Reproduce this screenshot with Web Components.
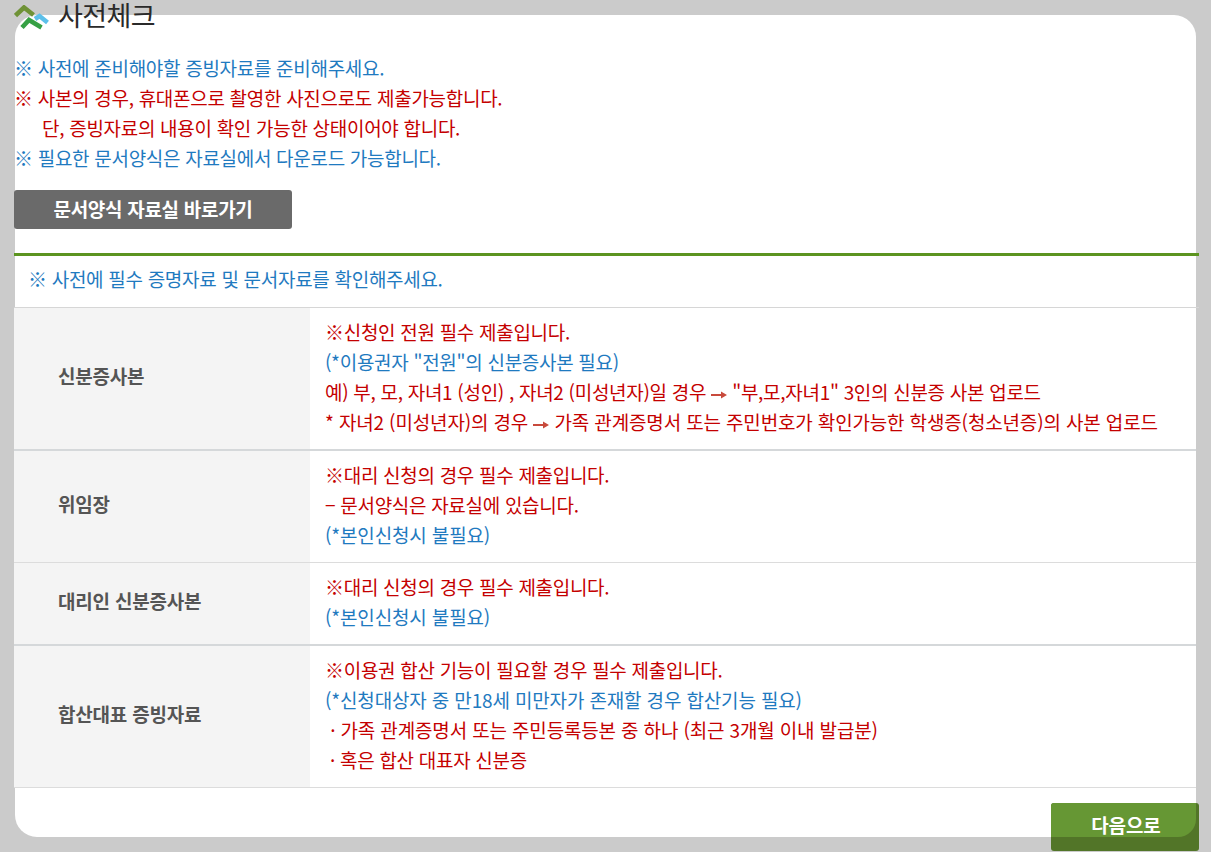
<!DOCTYPE html>
<html lang="ko">
<head>
<meta charset="utf-8">
<title>사전체크</title>
<style>
html, body { margin: 0; height: 100%; overflow: hidden; background: #cbcbcb; }
body { font-family: "Noto Sans CJK KR", "Noto Sans", sans-serif; display: flow-root; }
.wide { letter-spacing: -0.15px; }
</style>
</head>
<body>
<pre-check>
  <check-title>사전체크</check-title>
  <note-lines>
    <div class="blue">※ 사전에 준비해야할 증빙자료를 준비해주세요.</div>
    <div class="red">※ 사본의 경우, 휴대폰으로 촬영한 사진으로도 제출가능합니다.</div>
    <div class="red" style="padding-left:28px">단, 증빙자료의 내용이 확인 가능한 상태이어야 합니다.</div>
    <div class="blue">※ 필요한 문서양식은 자료실에서 다운로드 가능합니다.</div>
  </note-lines>
  <gray-button>문서양식 자료실 바로가기</gray-button>
  <doc-table caption="※ 사전에 필수 증명자료 및 문서자료를 확인해주세요.">
    <doc-row label="신분증사본" heavy>
      <div class="red">※신청인 전원 필수 제출입니다.</div>
      <div class="blue">(*이용권자 "전원"의 신분증사본 필요)</div>
      <div class="red">예) 부, 모, 자녀1 (성인) , 자녀2 (미성년자)일 경우 <arrow-mark></arrow-mark> "부,모,자녀1" 3인의 신분증 사본 업로드</div>
      <div class="red wide">* 자녀2 (미성년자)의 경우 <arrow-mark></arrow-mark> 가족 관계증명서 또는 주민번호가 확인가능한 학생증(청소년증)의 사본 업로드</div>
    </doc-row>
    <doc-row label="위임장">
      <div class="red">※대리 신청의 경우 필수 제출입니다.</div>
      <div class="red">− 문서양식은 자료실에 있습니다.</div>
      <div class="blue wide">(*본인신청시 불필요)</div>
    </doc-row>
    <doc-row label="대리인 신분증사본" heavy>
      <div class="red">※대리 신청의 경우 필수 제출입니다.</div>
      <div class="blue wide">(*본인신청시 불필요)</div>
    </doc-row>
    <doc-row label="합산대표 증빙자료">
      <div class="red">※이용권 합산 기능이 필요할 경우 필수 제출입니다.</div>
      <div class="blue wide">(*신청대상자 중 만18세 미만자가 존재할 경우 합산기능 필요)</div>
      <div class="red wide">&nbsp;· 가족 관계증명서 또는 주민등록등본 중 하나 (최근 3개월 이내 발급분)</div>
      <div class="red">&nbsp;· 혹은 합산 대표자 신분증</div>
    </doc-row>
  </doc-table>
  <next-button>다음으로</next-button>
</pre-check>

<script>
function shadow(el, markup) {
  el.attachShadow({mode: "open"}).innerHTML = markup;
}

// the coloured lines live in light DOM, so they share these colours
const lineColors = `
::slotted(.blue) { color: #1f7ac0; }
::slotted(.red) { color: #c40000; }
`;

customElements.define("pre-check", class extends HTMLElement {
  constructor() {
    super();
    shadow(this, `<style>
:host {
  display: flow-root;
  box-sizing: border-box;
  width: 1181px;
  height: 822px;
  margin: 15px 0 0 15px;
  background: #fff;
  border-radius: 22px;
}
.inner { margin-left: -1px; width: 1185px; }
</style>
<div class="inner"><slot></slot></div>`);
  }
});

customElements.define("check-title", class extends HTMLElement {
  constructor() {
    super();
    shadow(this, `<style>
:host {
  display: flex;
  align-items: flex-start;
  gap: 8px;
  height: 53px;
  margin-top: -15px;
  font-size: 27px;
  line-height: 29px;
  letter-spacing: -0.6px;
  color: #2a2a2a;
}
svg { display: block; margin-top: 5px; flex: none; }
</style>
<svg width="36" height="26" viewBox="0 0 36 26" fill="none" stroke-width="4.6">
  <path d="M1.5 10.5 L10 2.5 L19.5 10" stroke="#6f9236"/>
  <path d="M21 14 L25.5 11 L33.5 17.5" stroke="#5cc0ea"/>
  <path d="M8 22.5 L15 15 L27.5 22.5" stroke="#36a044"/>
</svg>
<span><slot></slot></span>`);
  }
});

customElements.define("note-lines", class extends HTMLElement {
  constructor() {
    super();
    shadow(this, `<style>
:host {
  display: block;
  font-size: 19px;
  line-height: 30px;
  letter-spacing: -0.3px;
}
${lineColors}
</style>
<slot></slot>`);
  }
});

customElements.define("gray-button", class extends HTMLElement {
  constructor() {
    super();
    shadow(this, `<style>
:host {
  display: flex;
  align-items: center;
  justify-content: center;
  box-sizing: border-box;
  width: 278px;
  height: 39px;
  margin-top: 17px;
  padding-bottom: 3px;
  background: #6a6a6a;
  border-radius: 3px;
  color: #fff;
  font-size: 19px;
  font-weight: 700;
  letter-spacing: -0.3px;
}
</style>
<slot></slot>`);
  }
});

customElements.define("doc-table", class extends HTMLElement {
  constructor() {
    super();
    shadow(this, `<style>
:host {
  display: block;
  margin-top: 24px;
  border-top: 3px solid #5c9420;
}
.cap {
  box-sizing: border-box;
  height: 52px;
  padding: 8px 0 0 14px;
  font-size: 19px;
  line-height: 30px;
  letter-spacing: -0.3px;
  color: #1f7ac0;
  border-bottom: 1px solid #d6d6d6;
}
.rows { width: 1182px; }
</style>
<div class="cap"></div>
<div class="rows"><slot></slot></div>`);
    this.shadowRoot.querySelector(".cap").textContent = this.getAttribute("caption");
  }
});

customElements.define("doc-row", class extends HTMLElement {
  constructor() {
    super();
    shadow(this, `<style>
:host {
  display: grid;
  grid-template-columns: 296px 1fr;
  border-bottom: 1px solid #dcdcdc;
  font-size: 19px;
  line-height: 30px;
  letter-spacing: -0.3px;
}
:host([heavy]) { border-bottom: 2px solid #d5d8da; }
.head {
  display: flex;
  align-items: center;
  padding: 0 0 6px 44px;
  background: #f4f4f4;
  color: #555;
  font-weight: 700;
  letter-spacing: -0.2px;
}
.body { padding: 9px 0 12px 15px; white-space: nowrap; }
${lineColors}
</style>
<div class="head"></div>
<div class="body"><slot></slot></div>`);
    this.shadowRoot.querySelector(".head").textContent = this.getAttribute("label");
  }
});

customElements.define("arrow-mark", class extends HTMLElement {
  constructor() {
    super();
    shadow(this, `<style>
:host { display: inline-block; vertical-align: 1px; }
svg { display: block; }
</style>
<svg width="16" height="8" viewBox="0 0 16 8"><path d="M0 3h10V0.5L16 4l-6 3.5V5H0z" fill="#c84a3c"/></svg>`);
  }
});

customElements.define("next-button", class extends HTMLElement {
  constructor() {
    super();
    shadow(this, `<style>
:host {
  display: block;
  box-sizing: border-box;
  width: 148px;
  height: 48px;
  margin: 15px 0 0 auto;
  background: #527528;
  border-radius: 3px;
  color: #fff;
  font-size: 19px;
  font-weight: 700;
  letter-spacing: -0.1px;
}
div {
  display: flex;
  align-items: center;
  justify-content: center;
  box-sizing: border-box;
  height: 34px;
  margin-right: 3px;
  padding: 8px 0 0 5px;
  background: #669734;
  border-radius: 3px 0 18px 0;
}
</style>
<div><slot></slot></div>`);
  }
});
</script>
</body>
</html>
